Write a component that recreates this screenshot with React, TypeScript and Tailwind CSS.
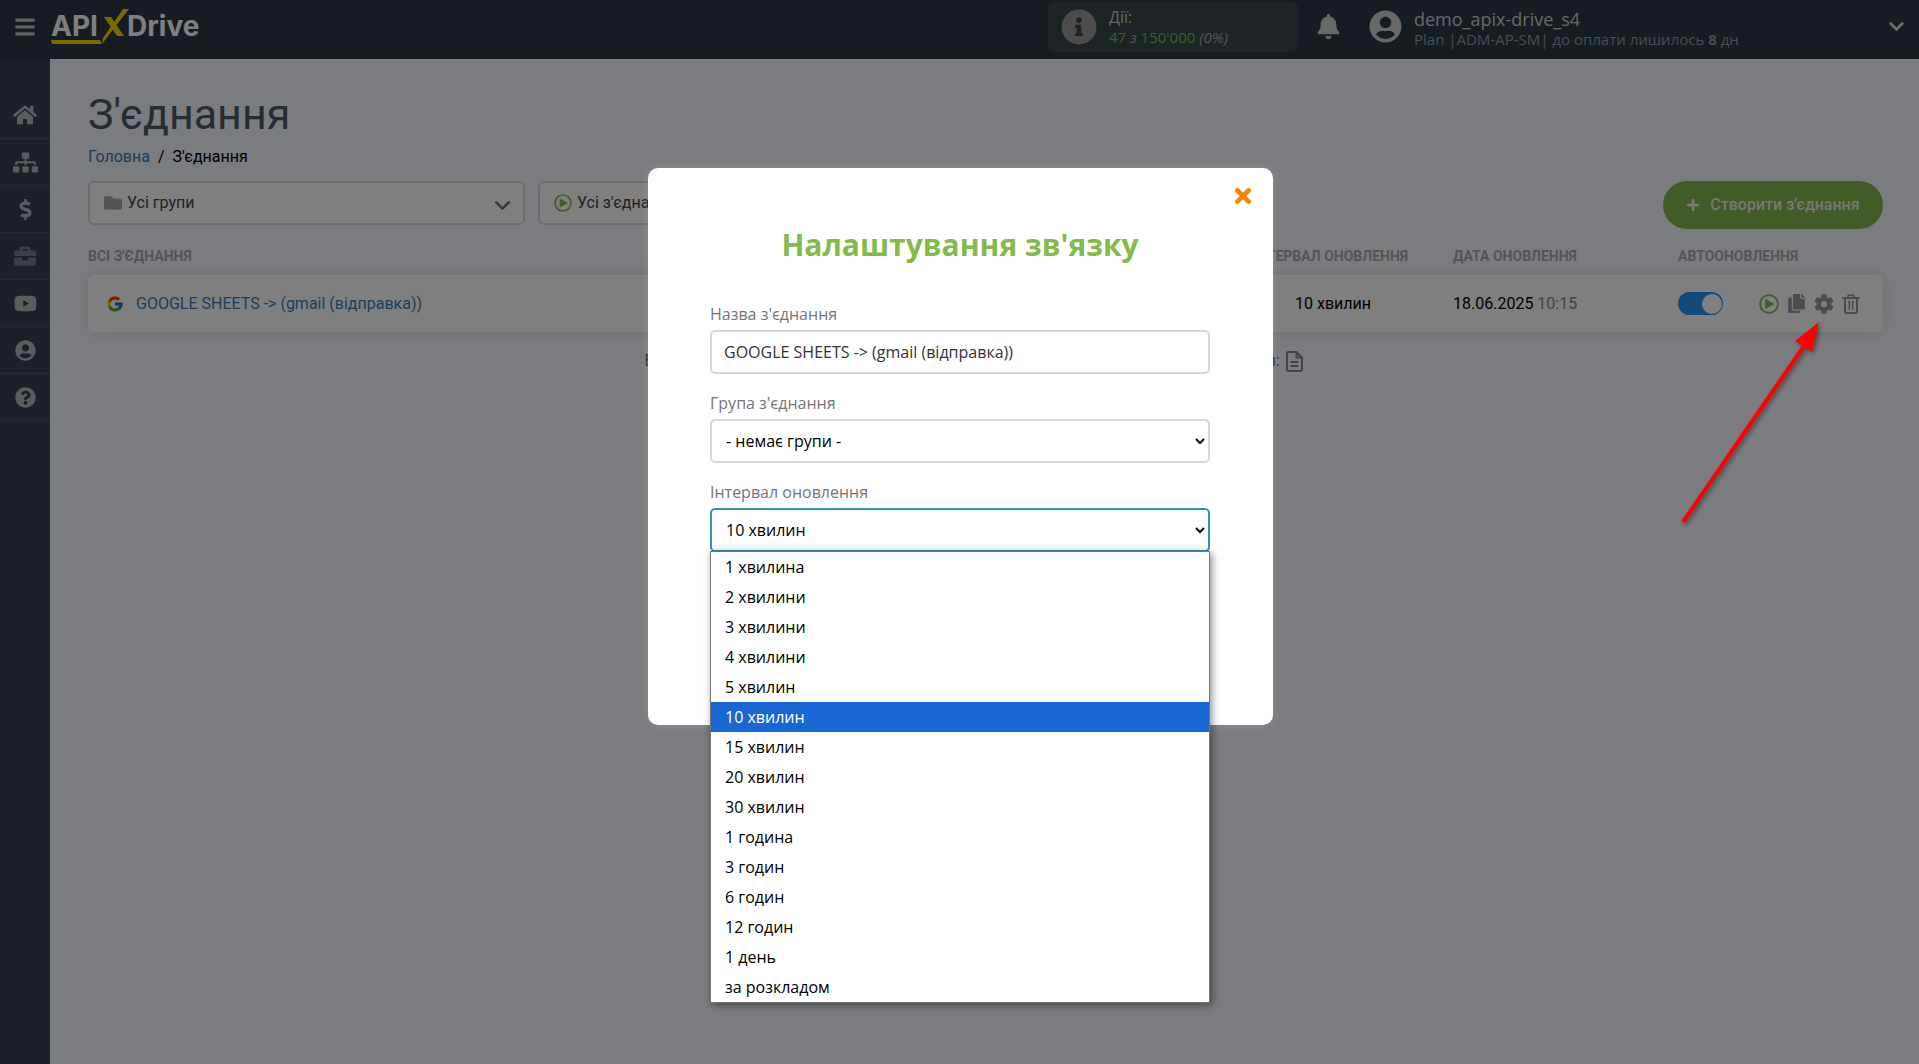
import { useState } from "react";
import type { ReactNode } from "react";
import { ChevronDown } from "lucide-react";
import {
  FaBars,
  FaBell,
  FaBriefcase,
  FaChevronDown,
  FaCog,
  FaCopy,
  FaDollarSign,
  FaFolder,
  FaHome,
  FaInfoCircle,
  FaPlus,
  FaQuestionCircle,
  FaSitemap,
  FaUserCircle,
  FaYoutube,
} from "react-icons/fa";
import { FcGoogle } from "react-icons/fc";

const navItems = [
  { label: "Головна", icon: <FaHome size={24} /> },
  { label: "З'єднання", icon: <FaSitemap size={25} /> },
  { label: "Оплата", icon: <FaDollarSign size={21} /> },
  { label: "Проєкти", icon: <FaBriefcase size={22} />, muted: true },
  { label: "Відео", icon: <FaYoutube size={23} /> },
  { label: "Профіль", icon: <FaUserCircle size={21} /> },
  { label: "Допомога", icon: <FaQuestionCircle size={21} /> },
];

const intervals = [
  "1 хвилина",
  "2 хвилини",
  "3 хвилини",
  "4 хвилини",
  "5 хвилин",
  "10 хвилин",
  "15 хвилин",
  "20 хвилин",
  "30 хвилин",
  "1 година",
  "3 годин",
  "6 годин",
  "12 годин",
  "1 день",
  "за розкладом",
];

function PlayIcon({ size }: { size: number }) {
  return (
    <svg width={size} height={size} viewBox="0 0 20 20" fill="none">
      <circle cx="10" cy="10" r="8.9" stroke="currentColor" strokeWidth="1.8" />
      <path d="M6.8 5.6 L14.8 10 L6.8 14.4 Z" fill="currentColor" stroke="currentColor" strokeWidth="0.8" strokeLinejoin="round" />
    </svg>
  );
}

function TrashIcon() {
  return (
    <svg width="18" height="20" viewBox="0 0 18 20" fill="none" stroke="currentColor" strokeWidth="2">
      <path d="M1 4 H17" strokeLinecap="round" />
      <path d="M5.5 3.5 L6.5 1.2 H11.5 L12.5 3.5" strokeWidth="1.7" />
      <path d="M3 4 V17.5 Q3 19 4.5 19 H13.5 Q15 19 15 17.5 V4" />
      <path d="M7.3 7.5 V15.5 M10.7 7.5 V15.5" strokeWidth="1.6" strokeLinecap="round" />
    </svg>
  );
}

function DocIcon() {
  return (
    <svg width="17" height="21" viewBox="0 0 17 21" fill="none" stroke="#888" strokeWidth="2">
      <path d="M10.5 1 H2.5 Q1 1 1 2.5 V18.5 Q1 20 2.5 20 H14.5 Q16 20 16 18.5 V6.5 L10.5 1 V6.5 H16" strokeLinejoin="round" />
      <path d="M4.5 11 H12.5 M4.5 15 H12.5" />
    </svg>
  );
}

function Logo() {
  return (
    <a href="#" aria-label="APIXDrive">
      <svg width="156" height="40" viewBox="0 0 156 40" className="font-['Inter',sans-serif]">
        <text x="1" y="29" fontSize="28" fontWeight="700" fill="#fff">API</text>
        <text x="77" y="29" fontSize="28" fontWeight="700" fill="#fff">Drive</text>
        <polygon points="1,33 50,33 52,37 2,37" fill="#f5d000" />
        <polygon points="73,2 79,2 55,33 52,37 53,31" fill="#f5d000" />
        <polygon points="54,10 61,10 74,29 67,29" fill="#f5d000" />
      </svg>
    </a>
  );
}

function Header() {
  return (
    <header className="flex h-[59px] items-center bg-[#2e3846] pb-1.5 font-['Open_Sans',sans-serif] text-white">
      <button aria-label="Меню" className="flex w-[50px] justify-center text-[#c4c4c4]">
        <FaBars size={22} />
      </button>
      <Logo />
      <div className="ml-auto flex h-[50px] w-[250px] items-center gap-3 rounded-md bg-[#3c484d] pl-[13px]">
        <FaInfoCircle size={36} className="text-[#999]" />
        <div>
          <div className="text-base leading-5 text-[#ccc]">Дії:</div>
          <div className="text-[15px] leading-5 text-[#82b84c]">
            47 <i className="text-[#aaa]">з</i> 150'000 <i className="text-[#aaa]">(0%)</i>
          </div>
        </div>
      </div>
      <button aria-label="Сповіщення" className="mr-4 ml-[18px] text-[#d0d0d0]">
        <FaBell size={25} />
      </button>
      <FaUserCircle size={33} className="mx-3 text-[#d0d0d0]" />
      <div className="mt-1 w-[474px]">
        <div className="text-lg leading-5 text-[#d0d0d0]">demo_apix-drive_s4</div>
        <div className="text-[15px] leading-5 text-[#999]">
          Plan |ADM-AP-SM| до оплати лишилось <b>8</b> дн
        </div>
      </div>
      <button aria-label="Профіль" className="mr-3.5 text-[#ddd]">
        <FaChevronDown size={17} />
      </button>
    </header>
  );
}

function Sidebar() {
  return (
    <nav className="w-[50px] shrink-0 bg-[#384052] pt-[33px]">
      {navItems.map((item) => (
        <a
          key={item.label}
          href="#"
          aria-label={item.label}
          className={`flex h-[47px] items-center justify-center border-b border-[#4a5263] ${item.muted ? "text-[#7b7f87]" : "text-[#b5b8bd]"}`}
        >
          {item.icon}
        </a>
      ))}
    </nav>
  );
}

function FilterButton({ icon, label }: { icon: ReactNode; label: string }) {
  return (
    <button className="flex h-11 w-[437px] items-center gap-[5px] rounded-md border-2 border-[#dadada] bg-white pr-2 pl-3.5 text-base text-[#444]">
      {icon}
      {label}
      <ChevronDown size={25} strokeWidth={2.5} className="mt-1 ml-auto text-[#777]" />
    </button>
  );
}

function Connections() {
  const [auto, setAuto] = useState(true);

  return (
    <main className="grow pr-9 pl-[38px] pt-[30px] font-['Roboto',sans-serif]">
      <h1 className="text-[43px] leading-[50px] text-[#4a5a64]">З'єднання</h1>
      <div className="mt-1.5 flex gap-2 text-base leading-6">
        <a href="#" className="text-[#3a7cb8]">Головна</a>
        <span>/</span>
        <span>З'єднання</span>
      </div>

      <div className="mt-3 flex items-start gap-[13px]">
        <FilterButton icon={<FaFolder size={18} className="text-[#aaa]" />} label="Усі групи" />
        <FilterButton icon={<span className="text-[#82b84c]"><PlayIcon size={18} /></span>} label="Усі з'єднання" />
        <button className="ml-auto flex h-12 w-[220px] items-center justify-center gap-2.5 rounded-full bg-[#82b84c] text-base font-medium text-[#eee]">
          <FaPlus size={14} />
          Створити з'єднання
        </button>
      </div>

      <table className="mt-[14px] w-full table-fixed text-left">
        <thead>
          <tr className="h-8 text-sm text-[#aaa]">
            <th className="pb-1.5">ВСІ З'ЄДНАННЯ</th>
            <th className="w-[200px] pb-1.5">ІНТЕРВАЛ ОНОВЛЕННЯ</th>
            <th className="w-[225px] pb-1.5">ДАТА ОНОВЛЕННЯ</th>
            <th className="w-[205px] pb-1.5">АВТООНОВЛЕННЯ</th>
          </tr>
        </thead>
        <tbody>
          <tr className="h-[57px] rounded-md bg-white text-base shadow-[0_0_16px_rgba(60,60,100,0.15)]">
            <td className="rounded-l-md pl-[18px]">
              <a href="#" className="flex items-center gap-3 text-[#3a7cb8]">
                <FcGoogle size={18} />
                GOOGLE SHEETS -&gt; (gmail (відправка))
              </a>
            </td>
            <td className="pl-[42px]">10 хвилин</td>
            <td>18.06.2025 <span className="text-[#888]">10:15</span></td>
            <td className="rounded-r-md">
              <div className="flex items-center">
                <label className="flex h-[23px] w-[45px] items-center justify-end rounded-full bg-[#2196f3] p-px">
                  <input
                    type="checkbox"
                    className="sr-only"
                    aria-label="Автооновлення"
                    checked={auto}
                    onChange={() => setAuto(!auto)}
                  />
                  <span className="size-[20px] rounded-full bg-white" />
                </label>
                <div className="ml-9 flex gap-2 text-[#999]">
                  <button aria-label="Запустити" className="text-[#82b84c]"><PlayIcon size={20} /></button>
                  <button aria-label="Копіювати"><FaCopy size={19} /></button>
                  <button aria-label="Налаштування"><FaCog size={20} /></button>
                  <button aria-label="Видалити"><TrashIcon /></button>
                </div>
              </div>
            </td>
          </tr>
        </tbody>
      </table>

      <p className="mt-[17px] flex items-center justify-center gap-1.5 pr-6 text-base text-[#666]">
        Виконати всі активні з'єднання зараз. Завантажити увесь журнал з'єднань системи:
        <DocIcon />
      </p>
    </main>
  );
}

function SettingsModal() {
  const [name, setName] = useState("GOOGLE SHEETS -> (gmail (відправка))");
  const [interval, setInterval] = useState("10 хвилин");

  return (
    <div
      role="dialog"
      aria-labelledby="settings-title"
      className="relative mt-[168px] h-[557px] w-[625px] rounded-[10px] bg-white pr-[63px] pl-[62px] font-['Open_Sans',sans-serif] shadow-[0_0_8px_rgba(255,255,255,0.15)]"
    >
      <button aria-label="Закрити" className="absolute top-[18px] right-5 text-[#ff8000]">
        <svg width="20" height="20" viewBox="0 0 20 20" stroke="currentColor" strokeWidth="4.6" strokeLinecap="round">
          <path d="M4.3 4.3 L15.7 15.7 M15.7 4.3 L4.3 15.7" />
        </svg>
      </button>
      <h2 id="settings-title" className="pt-[57px] text-center text-[30px] leading-10 font-bold text-[#84b94d]">
        Налаштування зв'язку
      </h2>

      <label htmlFor="name" className="mt-[35px] mb-0.5 block text-base leading-7 text-[#757575]">Назва з'єднання</label>
      <input
        id="name"
        className="block h-11 w-full rounded-[5px] border-2 border-[#d8d8d8] px-3 text-base text-[#333]"
        value={name}
        onChange={(e) => setName(e.target.value)}
      />

      <label htmlFor="group" className="mt-[15px] mb-0.5 block text-base leading-7 text-[#757575]">Група з'єднання</label>
      <select id="group" className="block h-11 w-full rounded-[5px] border-2 border-[#d8d8d8] bg-white px-2.5 text-base text-black">
        <option>- немає групи -</option>
      </select>

      <label htmlFor="interval" className="mt-[15px] mb-0.5 block text-base leading-7 text-[#757575]">Інтервал оновлення</label>
      <div className="relative">
        <select
          id="interval"
          className="block h-11 w-full rounded-[5px] border-2 border-[#3490b5] bg-white px-2.5 text-base text-black"
          value={interval}
          onChange={(e) => setInterval(e.target.value)}
        >
          {intervals.map((item) => (
            <option key={item}>{item}</option>
          ))}
        </select>
        <ul
          role="listbox"
          aria-label="Інтервал оновлення"
          className="absolute top-[43px] left-0 w-full border border-[#767676] bg-white text-base leading-[30px] text-black shadow-[2px_2px_8px_rgba(0,0,0,0.45)]"
        >
          {intervals.map((item) => (
            <li
              key={item}
              role="option"
              aria-selected={item === interval}
              onClick={() => setInterval(item)}
              className={`px-3.5 ${item === interval ? "bg-[#1967d2] text-white" : ""}`}
            >
              {item}
            </li>
          ))}
        </ul>
      </div>
    </div>
  );
}

// Red pointer that leads to the gear button
function Pointer() {
  return (
    <svg
      width="150"
      height="210"
      viewBox="0 0 150 210"
      className="absolute top-[318px] right-[94px] drop-shadow-[2px_2px_2px_rgba(0,0,0,0.4)]"
    >
      <path d="M8 204 L129 28" stroke="#f00" strokeWidth="4" />
      <path d="M144 4 L120 23 L128 28 L137 34 Z" fill="#f00" />
    </svg>
  );
}

export default function App() {
  return (
    <div className="relative flex min-h-screen flex-col bg-[#f6f8ff]">
      <Header />
      <div className="flex grow">
        <Sidebar />
        <Connections />
      </div>
      <div className="absolute inset-0 flex items-start justify-center bg-black/50 pl-0.5">
        <SettingsModal />
      </div>
      <Pointer />
    </div>
  );
}
